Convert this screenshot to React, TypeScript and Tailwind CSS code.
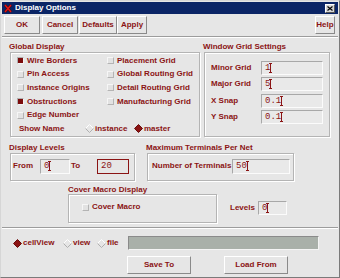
import React from "react";

const Cursor = () => (
  <svg width="3" height="10" viewBox="0 0 3 10" className="shrink-0 -ml-[1px]">
    <path d="M0 0.5H3M0 9.5H3M1.5 0.5V9.5" stroke="#8b1414" strokeWidth="1" fill="none" />
  </svg>
);

function Field({ className, value, cursor = true, focus = false }: { className: string; value: string; cursor?: boolean; focus?: boolean }) {
  return (
    <div
      className={`${className} shrink-0 flex items-start pt-[1px] pl-[3px] font-['Liberation_Mono',monospace] font-normal text-[9px] leading-[10px] text-[#8b1414] ${
        focus
          ? "border border-[#8b1414] bg-[#e6e6e6]"
          : "bg-[#e9e9e9] border border-t-[#a8a8a8] border-l-[#a8a8a8] border-r-[#fbfbfb] border-b-[#fbfbfb]"
      }`}
    >
      <span className="whitespace-pre">{value}</span>
      {cursor && <Cursor />}
    </div>
  );
}

function Check({ on = false }: { on?: boolean }) {
  return on ? (
    <div className="w-[7px] h-[7px] shrink-0 bg-[#7c0c0c] border border-t-[#b0b0b0] border-l-[#b0b0b0] border-r-[#f4f4f4] border-b-[#f4f4f4]" />
  ) : (
    <div className="w-[7px] h-[7px] shrink-0 bg-[#e2e2e2] border border-t-[#f6f6f6] border-l-[#f6f6f6] border-r-[#b4b4b4] border-b-[#b4b4b4]" />
  );
}

function Diamond({ on = false }: { on?: boolean }) {
  return on ? (
    <svg width="9" height="9" viewBox="0 0 9 9" className="shrink-0">
      <path d="M4.5 0.5L8.5 4.5L4.5 8.5L0.5 4.5Z" fill="#8b1414" stroke="#6a0c0c" strokeWidth="1" />
    </svg>
  ) : (
    <svg width="9" height="9" viewBox="0 0 9 9" className="shrink-0">
      <path d="M0.5 4.5L4.5 0.5L8.5 4.5" fill="none" stroke="#ffffff" strokeWidth="1" />
      <path d="M0.5 4.5L4.5 8.5L8.5 4.5" fill="none" stroke="#b0b0b0" strokeWidth="1" />
    </svg>
  );
}

function Btn({ className, children }: { className: string; children: React.ReactNode }) {
  return (
    <div
      className={`${className} h-[18px] shrink-0 flex items-center justify-center bg-[#e6e6e6] border border-t-[#ffffff] border-l-[#ffffff] border-r-[#8a8a8a] border-b-[#8a8a8a]`}
    >
      {children}
    </div>
  );
}

function CheckRow({ on = false, label }: { on?: boolean; label: string }) {
  return (
    <div className="w-[90px] flex items-center whitespace-nowrap">
      <Check on={on} />
      <span className="ml-[3px]">{label}</span>
    </div>
  );
}

const Separator = () => <div className="h-[2px] border-t border-t-[#9c9c9c] border-b border-b-[#ffffff]" />;

const groupBox =
  "border border-[#b4b4b4] shadow-[inset_1px_1px_0_#ffffff,1px_1px_0_#ffffff]";

export default function App() {
  return (
    <div className="w-[340px] h-[278px] overflow-hidden bg-[#e6e6e6] border border-t-[#d6d6d6] border-l-[#d6d6d6] border-r-[#7a7a7a] border-b-[#7a7a7a] p-[1px] flex flex-col font-['Liberation_Sans',Arial,sans-serif] text-[8px] leading-[10px] font-bold text-[#8b1414]">
      {/* Title bar */}
      <div className="h-[12px] shrink-0 bg-[#0b2566] flex items-center pl-[2px] pr-[3px]">
        <svg width="8" height="9" viewBox="0 0 8 9" className="shrink-0">
          <path d="M1 1L7 8M7 1L1 8" stroke="#5a0000" strokeWidth="2.6" />
          <path d="M1 1L7 8M7 1L1 8" stroke="#e01818" strokeWidth="1.4" />
        </svg>
        <span className="ml-[3px] text-white">Display Options</span>
        <div className="ml-auto w-[10px] h-[9px] bg-[#d6d6d6] border border-t-[#ffffff] border-l-[#ffffff] border-r-[#555555] border-b-[#555555] flex items-center justify-center">
          <svg width="6" height="5" viewBox="0 0 6 5">
            <path d="M0.5 0.5L5.5 4.5M5.5 0.5L0.5 4.5" stroke="#000000" strokeWidth="1.2" />
          </svg>
        </div>
      </div>

      {/* Button row */}
      <div className="mt-[2px] h-[18px] shrink-0 flex pl-[2px] pr-[3px]">
        <Btn className="w-[36px]">OK</Btn>
        <Btn className="ml-[2px] w-[36px]">Cancel</Btn>
        <Btn className="ml-[1px] w-[38px]">Defaults</Btn>
        <Btn className="w-[30px]">Apply</Btn>
        <Btn className="ml-auto w-[20px]">Help</Btn>
      </div>

      <div className="mt-[2px]">
        <Separator />
      </div>

      {/* Row 1 */}
      <div className="mt-[3px] flex shrink-0">
        <div className="ml-[7px] flex flex-col">
          <div className="h-[11px] pt-[1px] whitespace-nowrap">Global Display</div>
          <div className={`ml-[1px] w-[190px] h-[85px] ${groupBox} pt-[1px] pl-[6px] flex flex-col`}>
            <div className="h-[13.6px] flex items-center">
              <CheckRow on label="Wire Borders" />
              <CheckRow label="Placement Grid" />
            </div>
            <div className="h-[13.6px] flex items-center">
              <CheckRow label="Pin Access" />
              <CheckRow label="Global Routing Grid" />
            </div>
            <div className="h-[13.6px] flex items-center">
              <CheckRow label="Instance Origins" />
              <CheckRow label="Detail Routing Grid" />
            </div>
            <div className="h-[13.6px] flex items-center">
              <CheckRow on label="Obstructions" />
              <CheckRow label="Manufacturing Grid" />
            </div>
            <div className="h-[13.6px] flex items-center">
              <CheckRow label="Edge Number" />
            </div>
            <div className="h-[13.6px] flex items-center pl-[2px] whitespace-nowrap">
              <span className="w-[66px]">Show Name</span>
              <div className="w-[49px] flex items-center">
                <Diamond />
                <span className="ml-[1px]">instance</span>
              </div>
              <div className="flex items-center">
                <Diamond on />
                <span className="ml-[1px]">master</span>
              </div>
            </div>
          </div>
        </div>

        <div className="ml-[3px] flex flex-col">
          <div className="h-[11px] pt-[1px] whitespace-nowrap">Window Grid Settings</div>
          <div className={`ml-[1px] w-[126px] h-[85px] ${groupBox} pt-[8px] pl-[6px] flex flex-col gap-[2.3px]`}>
            <div className="flex items-center">
              <span className="w-[50px]">Minor Grid</span>
              <Field className="w-[62px] h-[14px]" value="1" />
            </div>
            <div className="flex items-center">
              <span className="w-[50px]">Major Grid</span>
              <Field className="w-[62px] h-[14px]" value="5" />
            </div>
            <div className="flex items-center">
              <span className="w-[50px]">X Snap</span>
              <Field className="w-[62px] h-[14px]" value="0.1" />
            </div>
            <div className="flex items-center">
              <span className="w-[50px]">Y Snap</span>
              <Field className="w-[62px] h-[14px]" value="0.1" />
            </div>
          </div>
        </div>
      </div>

      {/* Row 2 */}
      <div className="mt-[5px] flex shrink-0">
        <div className="ml-[7px] flex flex-col">
          <div className="h-[11px] pt-[1px] whitespace-nowrap">Display Levels</div>
          <div className={`ml-[1px] w-[125px] h-[28px] ${groupBox} pl-[2px] pb-[2px] flex items-center`}>
            <span className="w-[27px]">From</span>
            <Field className="w-[30px] h-[15px]" value="0" />
            <span className="w-[27px] pl-[1px]">To</span>
            <Field className="w-[32px] h-[15px]" value="20" cursor={false} focus />
          </div>
        </div>
        <div className="ml-[11px] flex flex-col">
          <div className="h-[11px] pt-[1px] whitespace-nowrap">Maximum Terminals Per Net</div>
          <div className={`ml-[1px] w-[147px] h-[28px] ${groupBox} pl-[4px] pb-[2px] flex items-center`}>
            <span className="w-[80px] whitespace-nowrap">Number of Terminals</span>
            <Field className="w-[58px] h-[15px]" value="50" />
          </div>
        </div>
      </div>

      {/* Row 3 */}
      <div className="mt-[4px] flex items-start shrink-0">
        <div className="ml-[66px] flex flex-col">
          <div className="h-[9px] whitespace-nowrap">Cover Macro Display</div>
          <div className={`w-[149px] h-[29px] ${groupBox} pt-[5px] pl-[13px]`}>
            <div className="h-[14px] flex items-center">
              <Check />
              <span className="ml-[3px]">Cover Macro</span>
            </div>
          </div>
        </div>
        <div className="ml-[13px] mt-[16px] h-[14px] flex items-center">
          <span className="w-[28px]">Levels</span>
          <Field className="w-[29px] h-[14px]" value="0" />
        </div>
      </div>

      <div className="mt-[4px]">
        <Separator />
      </div>

      {/* Radio row */}
      <div className="mt-[7px] h-[14px] shrink-0 flex items-center pl-[11px]">
        <div className="w-[50px] flex items-center">
          <Diamond on />
          <span className="ml-[1px]">cellView</span>
        </div>
        <div className="w-[34px] flex items-center">
          <Diamond />
          <span className="ml-[1px]">view</span>
        </div>
        <div className="w-[31px] flex items-center">
          <Diamond />
          <span className="ml-[1px]">file</span>
        </div>
        <div className="w-[191px] h-[14px] bg-[#a9b0a9] border border-t-[#8a8a8a] border-l-[#8a8a8a] border-r-[#f4f4f4] border-b-[#f4f4f4]" />
      </div>

      {/* Bottom buttons */}
      <div className="mt-[6px] flex shrink-0">
        <Btn className="ml-[125px] w-[64px]">Save To</Btn>
        <Btn className="ml-[33px] w-[64px]">Load From</Btn>
      </div>
    </div>
  );
}
